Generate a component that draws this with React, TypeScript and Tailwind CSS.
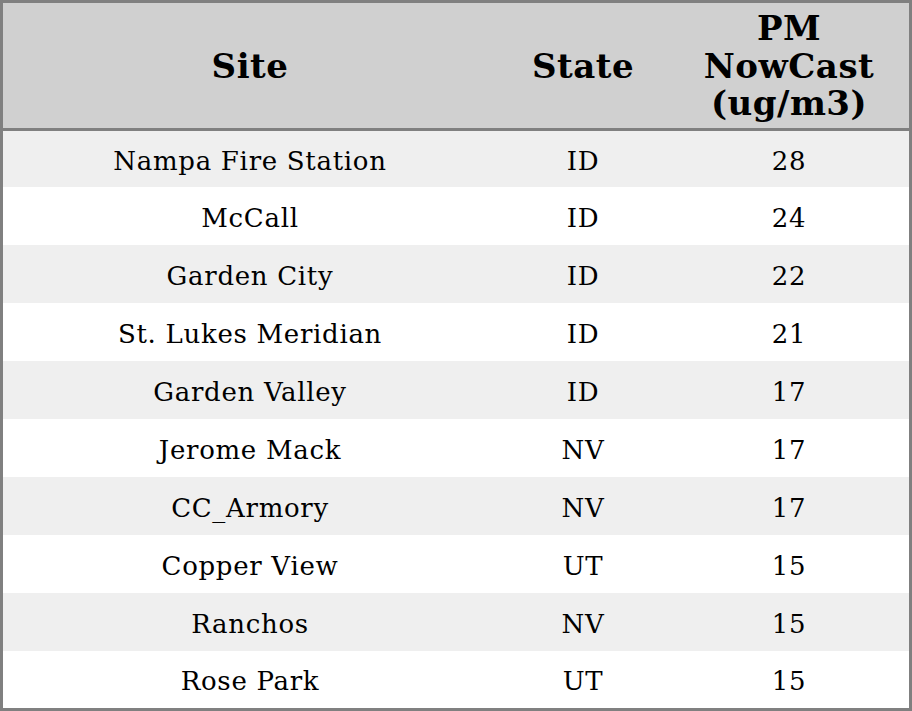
const rows = [
  { site: "Nampa Fire Station", state: "ID", pm: 28 },
  { site: "McCall", state: "ID", pm: 24 },
  { site: "Garden City", state: "ID", pm: 22 },
  { site: "St. Lukes Meridian", state: "ID", pm: 21 },
  { site: "Garden Valley", state: "ID", pm: 17 },
  { site: "Jerome Mack", state: "NV", pm: 17 },
  { site: "CC_Armory", state: "NV", pm: 17 },
  { site: "Copper View", state: "UT", pm: 15 },
  { site: "Ranchos", state: "NV", pm: 15 },
  { site: "Rose Park", state: "UT", pm: 15 },
];

// first and last rows are a touch shorter in the source
const rowHeight = (i: number) =>
  i === 0 ? "h-[56px]" : i === rows.length - 1 ? "h-[57px]" : "h-[58px]";

export default function App() {
  return (
    <div
      className="w-[912px] h-[711px] bg-white border-[3px] border-[#808080] flex flex-col text-black"
      style={{ fontFamily: '"DejaVu Serif", serif' }}
    >
      <div className="h-[125px] pt-[2px] bg-[#d0d0d0] flex items-center font-bold text-[34px] leading-[37.5px] tracking-[0.5px] shrink-0">
        <div className="w-[494px] text-center">Site</div>
        <div className="w-[172px] text-center">State</div>
        <div className="flex-1 text-center">
          PM
          <br />
          NowCast
          <br />
          (ug/m3)
        </div>
      </div>
      <div className="h-[3px] bg-[#808080] shrink-0" />
      {rows.map((r, i) => (
        <div
          key={r.site}
          className={`${rowHeight(i)} pt-[4px] flex items-center text-[26px] tracking-[0.7px] shrink-0 ${
            i % 2 === 0 ? "bg-[#efefef]" : "bg-white"
          }`}
        >
          <div className="w-[494px] text-center">{r.site}</div>
          <div className="w-[172px] text-center">{r.state}</div>
          <div className="flex-1 text-center">{r.pm}</div>
        </div>
      ))}
    </div>
  );
}
